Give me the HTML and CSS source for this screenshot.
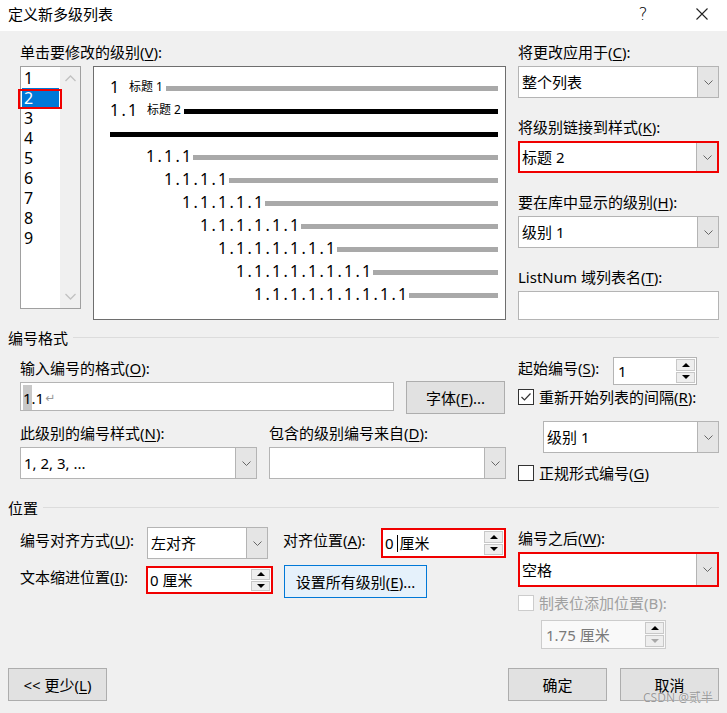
FILE: index.html
```html
<!DOCTYPE html>
<html lang="zh-CN">
<head>
    <meta charset="utf-8">
    <title>定义新多级列表</title>
    <link rel="stylesheet" href="styles.css">
</head>
<body>
    <div class="titlebar">
        <span class="title">定义新多级列表</span>
        <span class="help">?</span>
        <span class="close">
            <svg width="12" height="12" viewBox="0 0 12 12"><path d="M0.5 0.5L11.5 11.5M11.5 0.5L0.5 11.5" stroke="#222" stroke-width="1.1" fill="none"/></svg>
        </span>
    </div>

    <div class="dialog-body">
        <!-- levels + preview -->
        <div class="section">
            <div class="col-left">
                <div class="label">单击要修改的级别(<u>V</u>):</div>
                <div class="level-row">
                    <div class="level-list">
                        <ul class="levels">
                            <li>1</li>
                            <li class="selected">2</li>
                            <li>3</li>
                            <li>4</li>
                            <li>5</li>
                            <li>6</li>
                            <li>7</li>
                            <li>8</li>
                            <li>9</li>
                        </ul>
                        <div class="scrollbar">
                            <svg width="11" height="7" viewBox="0 0 11 7"><polyline points="0.5,6 5.5,1 10.5,6" stroke="#c2c2c2" stroke-width="1.3" fill="none"/></svg>
                            <svg width="11" height="7" viewBox="0 0 11 7"><polyline points="0.5,1 5.5,6 10.5,1" stroke="#c2c2c2" stroke-width="1.3" fill="none"/></svg>
                        </div>
                    </div>
                    <div class="preview">
                        <div class="pv-row"><span class="num">1</span><span class="style-name">标题 1</span><span class="bar"></span></div>
                        <div class="pv-row"><span class="num">1.1</span><span class="style-name">标题 2</span><span class="bar dark"></span></div>
                        <div class="pv-row"><span class="bar dark"></span></div>
                        <div class="pv-row lv3"><span class="num">1.1.1</span><span class="bar"></span></div>
                        <div class="pv-row lv4"><span class="num">1.1.1.1</span><span class="bar"></span></div>
                        <div class="pv-row lv5"><span class="num">1.1.1.1.1</span><span class="bar"></span></div>
                        <div class="pv-row lv6"><span class="num">1.1.1.1.1.1</span><span class="bar"></span></div>
                        <div class="pv-row lv7"><span class="num">1.1.1.1.1.1.1</span><span class="bar"></span></div>
                        <div class="pv-row lv8"><span class="num">1.1.1.1.1.1.1.1</span><span class="bar"></span></div>
                        <div class="pv-row lv9"><span class="num">1.1.1.1.1.1.1.1.1</span><span class="bar"></span></div>
                    </div>
                </div>
            </div>

            <div class="col-right">
                <div class="field">
                    <div class="label">将更改应用于(<u>C</u>):</div>
                    <div class="combo">
                        <span class="combo-val">整个列表</span>
                        <span class="combo-btn"><svg width="9" height="5" viewBox="0 0 9 5"><polyline points="0.5,0.5 4.5,4.5 8.5,0.5" stroke="#666" stroke-width="1" fill="none"/></svg></span>
                    </div>
                </div>
                <div class="field">
                    <div class="label">将级别链接到样式(<u>K</u>):</div>
                    <div class="combo marked">
                        <span class="combo-val">标题 2</span>
                        <span class="combo-btn"><svg width="9" height="5" viewBox="0 0 9 5"><polyline points="0.5,0.5 4.5,4.5 8.5,0.5" stroke="#666" stroke-width="1" fill="none"/></svg></span>
                    </div>
                </div>
                <div class="field">
                    <div class="label">要在库中显示的级别(<u>H</u>):</div>
                    <div class="combo">
                        <span class="combo-val">级别 1</span>
                        <span class="combo-btn"><svg width="9" height="5" viewBox="0 0 9 5"><polyline points="0.5,0.5 4.5,4.5 8.5,0.5" stroke="#666" stroke-width="1" fill="none"/></svg></span>
                    </div>
                </div>
                <div class="field">
                    <div class="label">ListNum 域列表名(<u>T</u>):</div>
                    <div class="textbox listnum"></div>
                </div>
            </div>
        </div>

        <!-- number format -->
        <div class="group-title first">编号格式</div>
        <div class="section">
            <div class="col-left">
                <div class="label gap-10">输入编号的格式(<u>O</u>):</div>
                <div class="format-row">
                    <div class="textbox format-input"><span class="hl">1</span>.1<span class="ret">↵</span></div>
                    <button class="btn font-btn">字体(<u>F</u>)...</button>
                </div>
                <div class="two-col">
                    <div class="half">
                        <div class="label">此级别的编号样式(<u>N</u>):</div>
                        <div class="combo">
                            <span class="combo-val">1, 2, 3, ...</span>
                            <span class="combo-btn"><svg width="9" height="5" viewBox="0 0 9 5"><polyline points="0.5,0.5 4.5,4.5 8.5,0.5" stroke="#666" stroke-width="1" fill="none"/></svg></span>
                        </div>
                    </div>
                    <div class="half">
                        <div class="label">包含的级别编号来自(<u>D</u>):</div>
                        <div class="combo">
                            <span class="combo-val"></span>
                            <span class="combo-btn"><svg width="9" height="5" viewBox="0 0 9 5"><polyline points="0.5,0.5 4.5,4.5 8.5,0.5" stroke="#666" stroke-width="1" fill="none"/></svg></span>
                        </div>
                    </div>
                </div>
            </div>

            <div class="col-right">
                <div class="start-row">
                    <span class="label start-label">起始编号(<u>S</u>):</span>
                    <div class="spin start-spin">
                        <span class="spin-val">1</span>
                        <span class="spin-btns"><span class="up"></span><span class="down"></span></span>
                    </div>
                </div>
                <div class="check-row restart">
                    <span class="check on"><svg width="14" height="14" viewBox="0 0 14 14"><polyline points="2.5,7 5.5,10 11.5,3.5" stroke="#333" stroke-width="1.2" fill="none"/></svg></span>
                    <span>重新开始列表的间隔(<u>R</u>):</span>
                </div>
                <div class="combo restart-combo">
                    <span class="combo-val">级别 1</span>
                    <span class="combo-btn"><svg width="9" height="5" viewBox="0 0 9 5"><polyline points="0.5,0.5 4.5,4.5 8.5,0.5" stroke="#666" stroke-width="1" fill="none"/></svg></span>
                </div>
                <div class="check-row legal">
                    <span class="check"></span>
                    <span>正规形式编号(<u>G</u>)</span>
                </div>
            </div>
        </div>

        <!-- position -->
        <div class="group-title second">位置</div>
        <div class="section">
            <div class="col-left">
                <div class="pos-row first-row">
                    <span class="label pos-label">编号对齐方式(<u>U</u>):</span>
                    <div class="combo align-combo">
                        <span class="combo-val">左对齐</span>
                        <span class="combo-btn"><svg width="9" height="5" viewBox="0 0 9 5"><polyline points="0.5,0.5 4.5,4.5 8.5,0.5" stroke="#666" stroke-width="1" fill="none"/></svg></span>
                    </div>
                    <span class="label pos-label at-label">对齐位置(<u>A</u>):</span>
                    <div class="spin marked at-spin">
                        <span class="spin-val">0&nbsp;<span class="caret"></span>厘米</span>
                        <span class="spin-btns"><span class="up"></span><span class="down"></span></span>
                    </div>
                </div>
                <div class="pos-row second-row">
                    <span class="label pos-label indent-label">文本缩进位置(<u>I</u>):</span>
                    <div class="spin marked indent-spin">
                        <span class="spin-val">0 厘米</span>
                        <span class="spin-btns"><span class="up"></span><span class="down"></span></span>
                    </div>
                    <button class="btn btn-focus all-btn">设置所有级别(<u>E</u>)...</button>
                </div>
            </div>

            <div class="col-right">
                <div class="label gap-10">编号之后(<u>W</u>):</div>
                <div class="combo marked after-combo">
                    <span class="combo-val">空格</span>
                    <span class="combo-btn"><svg width="9" height="5" viewBox="0 0 9 5"><polyline points="0.5,0.5 4.5,4.5 8.5,0.5" stroke="#666" stroke-width="1" fill="none"/></svg></span>
                </div>
                <div class="check-row disabled tab-row">
                    <span class="check"></span>
                    <span>制表位添加位置(B):</span>
                </div>
                <div class="spin disabled tab-spin">
                    <span class="spin-val">1.75 厘米</span>
                    <span class="spin-btns"><span class="up"></span><span class="down"></span></span>
                </div>
            </div>
        </div>

        <div class="footer">
            <button class="btn">&lt;&lt; 更少(<u>L</u>)</button>
            <div class="footer-right">
                <button class="btn">确定</button>
                <button class="btn">取消</button>
            </div>
            <span class="watermark">CSDN @贰半</span>
        </div>
    </div>
</body>
</html>
```

FILE: styles.css
```css
:root {
    --face: #f0f0f0;
    --border: #b4b4b4;
    --btn-bg: #e1e1e1;
    --btn-border: #adadad;
    --mark: #f00000;
    --bar-gray: #a9a9a9;
}

* {
    box-sizing: border-box;
}

body {
    margin: 0;
    width: 727px;
    height: 713px;
    background: var(--face);
    font-family: 'Noto Sans', 'Noto Sans CJK SC', sans-serif;
    font-size: 15px;
    line-height: 20px;
    color: #000;
    overflow: hidden;
}

u {
    text-underline-offset: 2px;
}

/* title bar */
.titlebar {
    height: 31px;
    background: #fff;
    display: flex;
    align-items: center;
    padding: 0 19px 4px 8px;
}

.title {
    flex: 1;
    font-size: 15px;
}

.help {
    width: 16px;
    text-align: center;
    font-size: 17px;
    font-family: 'DejaVu Sans', sans-serif;
    font-weight: 300;
    margin-right: 45px;
}

.close {
    display: flex;
}

.dialog-body {
    padding: 11px 8px 0 8px;
}

.section {
    display: flex;
    gap: 12px;
    padding-left: 12px;
}

.col-left {
    width: 486px;
}

.col-right {
    width: 201px;
}

.label {
    line-height: 20px;
    white-space: nowrap;
}

.gap-10 {
    margin-top: 10px;
}

/* level list */
.level-row {
    display: flex;
    gap: 12px;
    margin-top: 4px;
}

.level-list {
    width: 61px;
    height: 243px;
    border: 1px solid #a0a0a0;
    background: #fff;
    display: flex;
    padding: 1px 0 0 1px;
}

.levels {
    list-style: none;
    margin: 0;
    padding: 0;
    width: 37px;
}

.levels li {
    height: 20px;
    line-height: 20px;
    padding-left: 2px;
    font-size: 16px;
}

.levels li.selected {
    position: relative;
    background: #0078d7;
    color: #fff;
}

.levels li.selected::after {
    content: "";
    position: absolute;
    left: -4px;
    right: -3px;
    top: 1px;
    bottom: -1px;
    border: 2px solid var(--mark);
}

.scrollbar {
    flex: 1;
    margin: -1px 0 0 1px;
    background: #f0f0f0;
    display: flex;
    flex-direction: column;
    justify-content: space-between;
    align-items: center;
    padding: 8px 0 8px;
}

/* preview */
.preview {
    width: 413px;
    height: 254px;
    border: 1px solid #6e6e6e;
    background: #fff;
    padding: 8px 7px 0 16px;
}

.pv-row {
    height: 23px;
    display: flex;
    align-items: center;
}

.num {
    font-size: 16px;
    letter-spacing: 2.28px;
    white-space: nowrap;
}

.style-name {
    font-size: 12px;
    margin-left: 7.5px;
    white-space: nowrap;
}

.bar {
    flex: 1;
    height: 5px;
    margin-top: 3px;
    background: var(--bar-gray);
}

.style-name + .bar {
    margin-left: 3px;
}

.bar.dark {
    background: #000;
}

.lv3 { padding-left: 36px; }
.lv4 { padding-left: 54px; }
.lv5 { padding-left: 72px; }
.lv6 { padding-left: 90px; }
.lv7 { padding-left: 108px; }
.lv8 { padding-left: 126px; }
.lv9 { padding-left: 144px; }

/* right column fields */
.field + .field {
    margin-top: 19px;
}

.field .label {
    margin-bottom: 4px;
}

.combo {
    display: flex;
    height: 32px;
    border: 1px solid var(--border);
    background: #fff;
}

.combo-val {
    flex: 1;
    padding-left: 3px;
    display: flex;
    align-items: center;
    white-space: nowrap;
}

.combo-btn {
    width: 21px;
    background: #e5e5e5;
    border-left: 1px solid var(--border);
    display: flex;
    align-items: center;
    justify-content: center;
}

.textbox {
    border: 1px solid var(--border);
    background: #fff;
}

.listnum {
    height: 29px;
}

/* group titles */
.group-title {
    display: flex;
    align-items: center;
    gap: 5px;
    line-height: 20px;
}

.group-title::after {
    content: "";
    flex: 1;
    height: 1px;
    margin-top: -2px;
    background: #dcdcdc;
}

.group-title.first {
    margin-top: 8px;
}

.group-title.second {
    margin-top: 16px;
}

/* number format */
.format-row {
    display: flex;
    gap: 12px;
    margin-top: 3px;
}

.format-input {
    width: 374px;
    height: 29px;
    margin-top: 1px;
    padding: 2px 0 0 2px;
    display: flex;
    align-items: center;
    font-size: 15px;
}

.hl {
    background: #c8c8c8;
    padding: 3px 0 2px 0;
}

.ret {
    color: #999;
    font-size: 12px;
    margin-left: 1px;
    font-family: 'DejaVu Sans', sans-serif;
}

.btn {
    height: 33px;
    width: 99px;
    background: var(--btn-bg);
    border: 1px solid var(--btn-border);
    font-family: inherit;
    font-size: 15px;
    color: #000;
    padding: 0;
}

.btn-focus {
    background: #e5f1fb;
    border-color: #0078d7;
}

.two-col {
    display: flex;
    gap: 12px;
    margin-top: 9px;
}

.half {
    width: 237px;
}

.half .label {
    margin-bottom: 4px;
}

.start-row {
    display: flex;
    align-items: flex-start;
    margin-top: 9px;
}

.start-label {
    width: 95px;
    margin-top: 1px;
}

.spin {
    display: flex;
    height: 28px;
    border: 1px solid var(--border);
    background: #fff;
}

.start-spin {
    width: 84px;
}

.spin-val {
    flex: 1;
    padding-left: 4px;
    display: flex;
    align-items: center;
    white-space: nowrap;
}

.spin-btns {
    width: 20px;
    display: flex;
    flex-direction: column;
    gap: 1px;
    padding: 1px 1px 1px 0;
}

.spin-btns span {
    flex: 1;
    background: #eeeeee;
    border: 1px solid #c8c8c8;
    display: flex;
    align-items: center;
    justify-content: center;
}

.spin-btns .up::before {
    content: "";
    border-left: 4px solid transparent;
    border-right: 4px solid transparent;
    border-bottom: 4px solid #000;
}

.spin-btns .down::before {
    content: "";
    border-left: 4px solid transparent;
    border-right: 4px solid transparent;
    border-top: 4px solid #000;
}

/* red annotation frames */
.combo.marked,
.spin.marked {
    border: 2px solid var(--mark);
}

.marked .combo-val,
.marked .spin-val {
    padding-left: 2px;
}

.check-row {
    display: flex;
    align-items: center;
    gap: 5px;
    height: 18px;
    white-space: nowrap;
}

.check {
    width: 16px;
    height: 16px;
    border: 1px solid #333;
    background: #fff;
    display: flex;
    align-items: center;
    justify-content: center;
}

.restart {
    margin-top: 3px;
}

.restart-combo {
    margin: 15px 0 0 25px;
}

.legal {
    margin-top: 11px;
}

/* position */
.pos-row {
    display: flex;
    align-items: flex-start;
}

.first-row {
    margin-top: 9px;
}

.second-row {
    margin-top: 6px;
}

.pos-label {
    width: 127px;
    margin-top: 3px;
}

.align-combo {
    width: 121px;
}

.at-label {
    width: 98px;
    margin-left: 15px;
}

.at-spin {
    width: 125px;
    height: 30px;
    margin-top: 1px;
}

.caret {
    display: inline-block;
    width: 1px;
    height: 17px;
    background: #000;
    margin-right: 1px;
}

.indent-label {
    width: 126px;
    margin-top: 2px;
}

.indent-spin {
    width: 127px;
    height: 28px;
    margin-top: 1px;
}

.all-btn {
    width: 143px;
    margin-left: 11px;
}

.after-combo {
    margin-top: 4px;
    height: 35px;
}

.tab-row {
    margin-top: 7px;
}

.disabled {
    color: #a0a0a0;
}

.disabled .check {
    border-color: #cccccc;
}

.tab-spin {
    width: 125px;
    height: 29px;
    margin: 8px 0 0 23px;
    border-color: #cccccc;
    background: #f9f9f9;
    color: #7a7a7a;
}

.tab-spin .spin-btns .down::before {
    border-top-color: #a8a8a8;
}

/* footer */
.footer {
    position: relative;
    display: flex;
    justify-content: space-between;
    margin-top: 19px;
}

.footer-right {
    display: flex;
    gap: 13px;
}

.watermark {
    position: absolute;
    right: 6px;
    top: 23px;
    font-size: 12px;
    line-height: 14px;
    color: #9a9a9a;
    text-shadow: 0 0 1px #fff;
}
```
